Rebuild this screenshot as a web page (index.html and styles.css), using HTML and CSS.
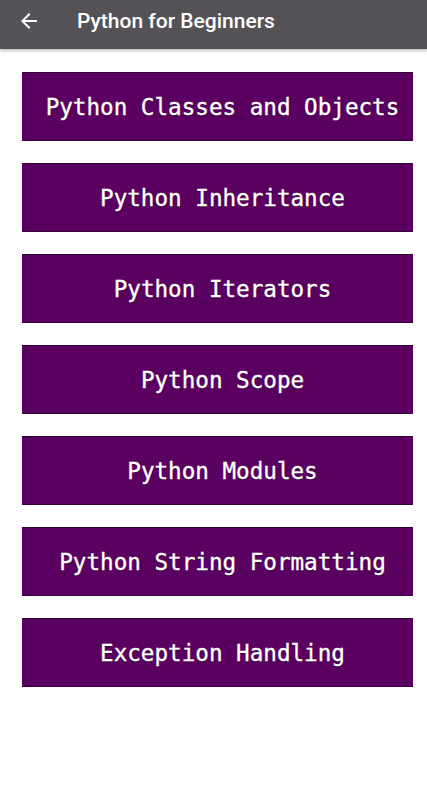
FILE: index.html
```html
<!DOCTYPE html>
<html>
<head>
<meta charset="utf-8">
<link rel="stylesheet" href="styles.css">
</head>
<body>
<header class="appbar">
  <svg class="back" width="24" height="24" viewBox="0 0 24 24"><path d="M20 11H7.83l5.59-5.59L12 4l-8 8 8 8 1.41-1.41L7.83 13H20v-2z" fill="#fff"/></svg>
  <h1 class="title">Python for Beginners</h1>
</header>
<main class="list">
  <div class="item">Python Classes and Objects</div>
  <div class="item">Python Inheritance</div>
  <div class="item">Python Iterators</div>
  <div class="item">Python Scope</div>
  <div class="item">Python Modules</div>
  <div class="item">Python String Formatting</div>
  <div class="item">Exception Handling</div>
</main>
</body>
</html>
```
FILE: styles.css
```css
html, body { margin: 0; padding: 0; background: #fff; }
body { width: 427px; height: 800px; overflow: hidden; }
.appbar {
  height: 49px;
  box-sizing: border-box;
  padding-top: 9px;
  background: #545256;
  display: flex;
  align-items: flex-start;
  box-shadow: 0 2px 3px rgba(0,0,0,0.25);
  position: relative;
}
.back { margin-left: 17px; flex: none; }
.title {
  margin: 0 0 0 36px;
  color: #fff;
  font-family: Roboto, "Noto Sans", sans-serif;
  font-weight: 500;
  font-size: 21px;
  line-height: 25px;
}
.list {
  display: flex;
  flex-direction: column;
  gap: 22px;
  padding: 23px 14px 0 22px;
}
.item {
  height: 69px;
  box-sizing: border-box;
  background: #5a0060;
  border-top: 1px solid #2d0030;
  border-bottom: 1px solid #3a003d;
  color: #fff;
  font-family: "DejaVu Sans Mono", monospace;
  font-size: 22.6px;
  -webkit-text-stroke: 0.35px #fff;
  display: flex;
  align-items: center;
  justify-content: center;
  padding-left: 10px;
  white-space: nowrap;
  text-shadow: 0 1px 1px rgba(0,0,0,0.45);
}
```
